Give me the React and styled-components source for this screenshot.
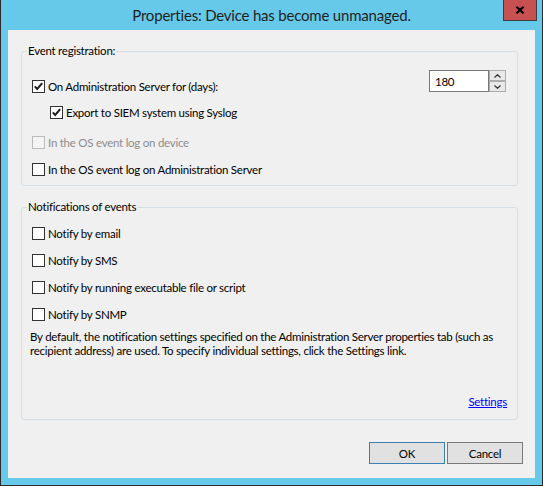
import React from "react";
import styled, { createGlobalStyle } from "styled-components";

const GlobalStyle = createGlobalStyle`
    body {
        margin: 0;
        background: #ffffff;
    }
    * {
        box-sizing: border-box;
    }
`;

export default function App(){
    return(
        <>
            <GlobalStyle/>
            <WINDOW>
                <TITLEBAR>
                    <TITLE>Properties: Device has become unmanaged.</TITLE>
                    <CLOSE aria-label="Close">
                        <svg width="10" height="8" viewBox="0 0 10 8">
                            <path d="M1.5 0.8 L8.5 7.2 M8.5 0.8 L1.5 7.2" stroke="#000" strokeWidth="2.2" fill="none"/>
                        </svg>
                    </CLOSE>
                </TITLEBAR>
                <CLIENT>
                    <GROUP>
                        <LEGEND>Event registration:</LEGEND>
                        <GROUPBODY $top={11} $bottom={8}>
                            <FIRSTROW>
                                <ROW $mt={9}>
                                    <CheckBox checked/>
                                    <LABEL>On Administration Server for (days):</LABEL>
                                </ROW>
                                <SPINNER>
                                    <SPININPUT>180</SPININPUT>
                                    <SPINBUTTONS>
                                        <SPINBUTTON>
                                            <svg width="7" height="4" viewBox="0 0 7 4"><path d="M0.5 3.5 L3.5 0.7 L6.5 3.5" stroke="#333" strokeWidth="1.2" fill="none"/></svg>
                                        </SPINBUTTON>
                                        <SPINBUTTON>
                                            <svg width="7" height="4" viewBox="0 0 7 4"><path d="M0.5 0.5 L3.5 3.3 L6.5 0.5" stroke="#333" strokeWidth="1.2" fill="none"/></svg>
                                        </SPINBUTTON>
                                    </SPINBUTTONS>
                                </SPINNER>
                            </FIRSTROW>
                            <ROW $mt={11} $indent={18}>
                                <CheckBox checked/>
                                <LABEL>Export to SIEM system using Syslog</LABEL>
                            </ROW>
                            <ROW $mt={15}>
                                <CheckBox disabled/>
                                <LABEL $disabled>In the OS event log on device</LABEL>
                            </ROW>
                            <ROW $mt={12}>
                                <CheckBox/>
                                <LABEL>In the OS event log on Administration Server</LABEL>
                            </ROW>
                        </GROUPBODY>
                    </GROUP>
                    <GROUP $mt={13}>
                        <LEGEND>Notifications of events</LEGEND>
                        <GROUPBODY $top={11} $bottom={9}>
                            {["Notify by email","Notify by SMS","Notify by running executable file or script","Notify by SNMP"].map((item,index)=>{
                                return <ROW key={index} $mt={index===0 ? 0 : 12}><CheckBox/><LABEL>{item}</LABEL></ROW>;
                            })}
                            <NOTE>
                                By default, the notification settings specified on the Administration Server properties tab (such as<br/>
                                recipient address) are used. To specify individual settings, click the Settings link.
                            </NOTE>
                            <LINK href="#">Settings</LINK>
                        </GROUPBODY>
                    </GROUP>
                    <BUTTONS>
                        <BUTTON $default>OK</BUTTON>
                        <BUTTON>Cancel</BUTTON>
                    </BUTTONS>
                </CLIENT>
            </WINDOW>
        </>
    );
}

function CheckBox(props){
    return(
        <BOX $disabled={props.disabled}>
            {props.checked && (
                <svg width="11" height="11" viewBox="0 0 11 11">
                    <path d="M1.8 5.4 L4.2 7.9 L9.2 2.2" stroke="#1e1e1e" strokeWidth="2" fill="none"/>
                </svg>
            )}
        </BOX>
    );
}

const WINDOW = styled.div`
    display: flex;
    flex-direction: column;
    width: 543px;
    height: 486px;
    background-color: #67c9ea;
    border: 1px solid #2b2b2b;
    border-top: none;
    font-family: "Segoe UI", Lato, sans-serif;
    font-size: 11.5px;
    letter-spacing: -0.25px;
    color: #000000;
`;
const TITLEBAR = styled.div`
    position: relative;
    display: flex;
    align-items: center;
    justify-content: center;
    height: 30px;
    flex-shrink: 0;
`;
const TITLE = styled.div`
    font-size: 15px;
    letter-spacing: -0.2px;
    color: #1f1f1f;
`;
const CLOSE = styled.div`
    position: absolute;
    top: 0;
    right: 5px;
    width: 34px;
    height: 21px;
    display: flex;
    align-items: center;
    justify-content: center;
    background-color: #c75050;
    border: 1px solid #3c3c3c;
    border-top: none;
`;
const CLIENT = styled.div`
    display: flex;
    flex-direction: column;
    flex: 1;
    margin: 0 7px 7px 7px;
    padding: 13px 17px 0 13px;
    background-color: #f0f0f0;
`;
const GROUP = styled.fieldset`
    margin: ${p => p.$mt || 0}px 0 0 0;
    padding: 0;
    border: 1px solid #d5dfe5;
    border-radius: 3px;
    min-width: 0;
`;
const LEGEND = styled.legend`
    margin-left: 5px;
    padding: 0 1px;
    line-height: 16px;
`;
const GROUPBODY = styled.div`
    display: flex;
    flex-direction: column;
    padding: ${p => p.$top}px 10px ${p => p.$bottom}px 10px;
`;
const FIRSTROW = styled.div`
    display: flex;
    justify-content: space-between;
    align-items: flex-start;
    padding-right: 1px;
`;
const ROW = styled.div`
    display: flex;
    align-items: center;
    height: 15px;
    margin-top: ${p => p.$mt || 0}px;
    margin-left: ${p => p.$indent || 0}px;
`;
const BOX = styled.span`
    display: flex;
    align-items: center;
    justify-content: center;
    width: 13px;
    height: 13px;
    flex-shrink: 0;
    border: 1px solid ${p => p.$disabled ? "#bcbcbc" : "#333333"};
    background-color: ${p => p.$disabled ? "#f4f4f4" : "#ffffff"};
`;
const LABEL = styled.span`
    margin-left: 3px;
    line-height: 15px;
    white-space: nowrap;
    color: ${p => p.$disabled ? "#8d8d8d" : "#000000"};
`;
const SPINNER = styled.div`
    display: flex;
    height: 22px;
`;
const SPININPUT = styled.div`
    display: flex;
    align-items: center;
    width: 60px;
    height: 22px;
    padding-left: 5px;
    border: 1px solid #7a7a7a;
    background-color: #ffffff;
`;
const SPINBUTTONS = styled.div`
    display: flex;
    flex-direction: column;
    width: 17px;
`;
const SPINBUTTON = styled.div`
    display: flex;
    align-items: center;
    justify-content: center;
    height: 11px;
    border: 1px solid #acacac;
    background-color: #e8e8e8;
`;
const NOTE = styled.p`
    margin: 8px 0 0 -2px;
    line-height: 14px;
    white-space: nowrap;
`;
const LINK = styled.a`
    align-self: flex-end;
    margin-top: 36px;
    line-height: 16px;
    color: #0000ff;
    text-decoration: underline;
`;
const BUTTONS = styled.div`
    display: flex;
    justify-content: flex-end;
    gap: 2px;
    margin-top: 22px;
    margin-right: -5px;
`;
const BUTTON = styled.button`
    width: 76px;
    height: 22px;
    padding: 0;
    font-family: inherit;
    font-size: 11.5px;
    letter-spacing: -0.25px;
    color: #000000;
    background-color: #e1e1e1;
    border: 1px solid ${p => p.$default ? "#3c7fb1" : "#7a7a7a"};
`;
